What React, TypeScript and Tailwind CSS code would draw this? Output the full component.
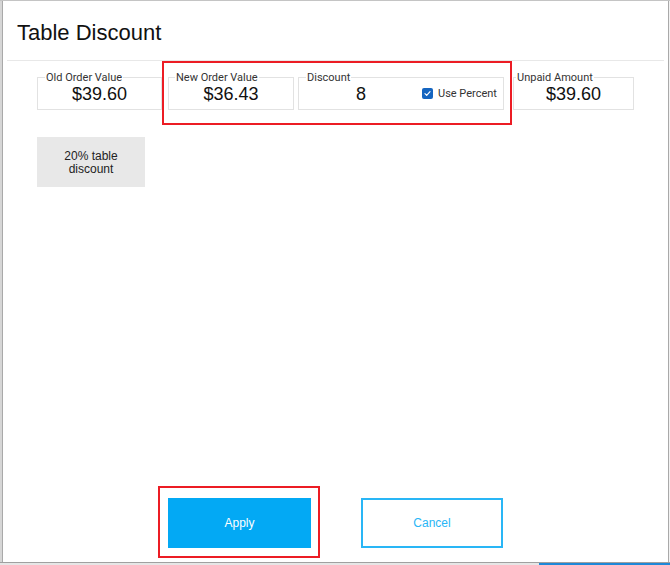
import React from "react";

function ValueBox({
  label,
  value,
  className,
  labelPos = "left-[7px]",
}: {
  label: string;
  value: string;
  className: string;
  labelPos?: string;
}) {
  return (
    <div className={`relative h-[33px] border border-[#e2e2e2] flex items-center justify-center ${className}`}>
      <span
        className={`absolute -top-[6px] ${labelPos} bg-white px-[1px] text-[11px] leading-[12px] text-[#333] font-['Roboto',sans-serif]`}
      >
        {label}
      </span>
      <span className="text-[18px] leading-none text-[#111] pt-[1px]">{value}</span>
    </div>
  );
}

export default function App() {
  return (
    <div className="w-[670px] h-[565px] bg-white flex flex-col font-['Liberation_Sans',Arial,sans-serif] overflow-hidden">
      {/* window top edge */}
      <div className="h-px bg-[#c4c4c4]" />
      <div className="flex flex-1 min-h-0">
        {/* left window edge */}
        <div className="w-[2px] bg-[#d6d6d6]" />
        <div className="w-px bg-[#a9a9a9]" />
        <div className="flex-1 flex flex-col bg-white">
          <div className="h-[59px] pl-[14px] pt-[19px] text-[22px] leading-[26px] text-[#111]">
            Table Discount
          </div>
          <div className="h-px bg-[#e8e8e8] ml-[4px] mr-[4px]" />

          {/* value fields */}
          <div className="flex items-start">
            <ValueBox label="Old Order Value" value="$39.60" className="ml-[34px] mt-[16px] w-[125px]" />
            <div className="flex gap-[4px] border-2 border-[#ec1c24] pl-[4px] pr-[6px] pt-[14px] pb-[13px]">
              <ValueBox label="New Order Value" value="$36.43" className="w-[126px]" labelPos="left-[6px]" />
              <div className="relative h-[33px] w-[206px] border border-[#e2e2e2] flex items-center">
                <span className="absolute -top-[6px] left-[7px] bg-white px-[1px] text-[11px] leading-[12px] text-[#333] font-['Roboto',sans-serif]">
                  Discount
                </span>
                <span className="w-[124px] text-center text-[18px] leading-none text-[#111] pt-[1px]">8</span>
                <span className="ml-[-1px] w-[11px] h-[11px] rounded-[2px] bg-[#1565c0] flex items-center justify-center">
                  <svg width="9" height="9" viewBox="0 0 10 10">
                    <path d="M2.2 5.2 L4.1 7 L7.8 3" fill="none" stroke="white" strokeWidth="1.3" strokeLinecap="round" strokeLinejoin="round" />
                  </svg>
                </span>
                <span className="ml-[5px] text-[11px] leading-none text-[#333] font-['Roboto',sans-serif]">
                  Use Percent
                </span>
              </div>
            </div>
            <ValueBox
              label="Unpaid Amount"
              value="$39.60"
              className="ml-px mt-[16px] w-[121px]"
              labelPos="left-[2px]"
            />
          </div>

          {/* preset discounts */}
          <div className="flex mt-[12px]">
            <button className="ml-[34px] w-[108px] h-[50px] bg-[#e8e8e8] text-[12px] leading-[13px] text-[#222] pt-[1px]">
              20% table
              <br />
              discount
            </button>
          </div>

          <div className="flex-1" />

          {/* actions */}
          <div className="flex items-start pb-[4px]">
            <div className="ml-[155px] border-2 border-[#ec1c24] pl-[8px] pr-[7px] pt-[10px] pb-[8px]">
              <button className="w-[143px] h-[50px] bg-[#03a9f4] text-white text-[12px]">Apply</button>
            </div>
            <button className="ml-[41px] mt-[12px] w-[142px] h-[50px] border-2 border-[#29b6f6] text-[#29b6f6] text-[12px] bg-white">
              Cancel
            </button>
          </div>
        </div>
        {/* right window edge */}
        <div className="w-px bg-[#a9a9a9]" />
        <div className="w-px bg-[#f2f2f2]" />
      </div>
      {/* bottom window edge and taskbar sliver */}
      <div className="h-px bg-[#a0a0a0]" />
      <div className="h-[2px] flex">
        <div className="w-[539px] bg-[#e6e6e6]" />
        <div className="flex-1 bg-[#1e88d8]" />
      </div>
    </div>
  );
}
